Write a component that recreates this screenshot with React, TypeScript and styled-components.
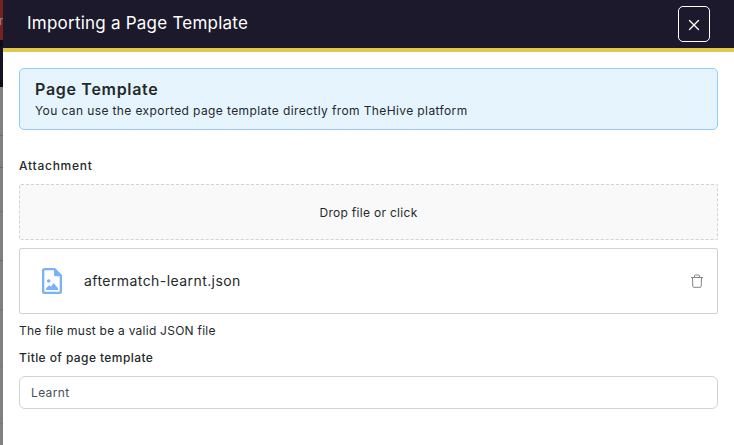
import React from 'react';
import styled, { createGlobalStyle } from 'styled-components';

const GlobalStyle = createGlobalStyle`
  * { box-sizing: border-box; }
  body { margin: 0; background: #fff; font-family: Inter, sans-serif; color: #24292b; overflow: hidden; }
`;

const Screen = styled.div`
  display: flex;
  width: 734px;
  height: 445px;
  overflow: hidden;
`;

const Backdrop = styled.div`
  width: 3px;
  flex: none;
  display: flex;
  flex-direction: column;
  background: #808080;
`;

const Strip = styled.div<{ $h: number; $bg: string; $line?: string }>`
  height: ${p => p.$h}px;
  flex: none;
  background: ${p => p.$bg};
  border-bottom: ${p => (p.$line ? `1px solid ${p.$line}` : '0')};
  overflow: hidden;
  color: #8f8888;
  font-size: 12px;
  line-height: 42px;
  text-indent: -1px;
`;

const Drawer = styled.div`
  flex: 1;
  min-width: 0;
  background: #fff;
`;

const Header = styled.header`
  height: 52px;
  background: #1b192b;
  border-bottom: 4px solid #e1c84d;
  display: flex;
  align-items: center;
  justify-content: space-between;
  padding: 0 24px;
`;

const Title = styled.h1`
  margin: -2px 0 0;
  font-size: 17px;
  font-weight: 400;
  line-height: 24px;
  letter-spacing: 0.23px;
  color: #fff;
  white-space: nowrap;
`;

const CloseButton = styled.button`
  width: 32px;
  height: 36px;
  padding: 0;
  border: 1px solid #fff;
  border-radius: 5px;
  background: transparent;
  display: flex;
  align-items: center;
  justify-content: center;
  svg { margin-top: 2px; }
`;

const Body = styled.main`
  padding: 16px 16px 0;
`;

const Notice = styled.section`
  height: 62px;
  border: 1px solid #94cbf7;
  border-radius: 5px;
  background: #e6f4fe;
  padding: 9px 15px;
`;

const NoticeTitle = styled.h2`
  margin: 0;
  font-size: 16px;
  line-height: 22px;
  font-weight: 600;
  letter-spacing: 0.7px;
`;

const NoticeText = styled.p`
  margin: 1px 0 0;
  font-size: 12px;
  line-height: 20px;
  letter-spacing: 0.39px;
  white-space: nowrap;
`;

const Label = styled.div<{ $top: number; $spacing: number; $weight?: number }>`
  margin-top: ${p => p.$top}px;
  font-size: 12px;
  line-height: 18px;
  font-weight: ${p => p.$weight ?? 500};
  letter-spacing: ${p => p.$spacing}px;
`;

const DropZone = styled.div`
  margin-top: 9px;
  height: 56px;
  border: 1px dashed #d2d2d2;
  border-radius: 2px;
  background: #f9f9f9;
  display: flex;
  align-items: center;
  justify-content: center;
  font-size: 12px;
  letter-spacing: 0.3px;
`;

const FileRow = styled.div`
  margin-top: 8px;
  height: 66px;
  border: 1px solid #d2d2d2;
  border-radius: 2px;
  display: flex;
  align-items: center;
  padding: 0 14px 0 22px;
`;

const FileName = styled.span`
  flex: 1;
  margin: -2px 0 0 22px;
  font-size: 14px;
  letter-spacing: 0.43px;
`;

const Field = styled.input`
  display: block;
  width: 100%;
  height: 33px;
  margin-top: 9px;
  padding: 0 11px;
  border: 1px solid #d2d2d2;
  border-radius: 6px;
  background: #fff;
  font: 400 12px Inter, sans-serif;
  letter-spacing: 0.35px;
  color: #495057;
  outline: none;
`;

const strips = [
  { h: 40, bg: '#79211f', text: 'r' },
  { h: 7, bg: '#0d0c16' },
  { h: 33, bg: '#161329' },
  { h: 7, bg: '#0d0c16' },
  { h: 49, bg: '#808080', line: '#6c6c6c' },
  { h: 32, bg: '#808080', line: '#686868' },
  { h: 44, bg: '#808080', line: '#747474' },
  { h: 49, bg: '#808080', line: '#696969' },
  { h: 49, bg: '#808080', line: '#747474' },
  { h: 57, bg: '#808080', line: '#787878' },
  { h: 57, bg: '#808080', line: '#787878' },
];

const CloseIcon = () => (
  <svg width="12" height="12" viewBox="0 0 12 12" fill="none" stroke="#fff" strokeWidth="1.4" strokeLinecap="round">
    <path d="M1.500 1.500l9 9M10.500 1.500l-9 9" />
  </svg>
);

const ImageFileIcon = () => (
  <svg width="20" height="26" viewBox="0 0 20 26" fill="#7ab2fa">
    <path fillRule="evenodd" d="M2.500 0H13l7 7v16.500a2.500 2.500 0 0 1-2.500 2.500h-15A2.500 2.500 0 0 1 0 23.500v-21A2.500 2.500 0 0 1 2.500 0zM3 2.200a.7.7 0 0 0-.7.7v20.200a.7.7 0 0 0 .7.7h14a.7.7 0 0 0 .7-.7V8.300h-4.200a1.500 1.500 0 0 1-1.500-1.500V2.200z" />
    <circle cx="6.700" cy="13" r="1.800" />
    <path d="M4.200 22v-2l3-2.700 1.700 1.500 2.700-3.800 4.400 5.200V22z" />
  </svg>
);

const TrashIcon = () => (
  <svg width="12" height="14" viewBox="0 0 12 14" fill="none" stroke="#858585" strokeWidth="1">
    <path d="M0 3.500h12M3.500 3V1.800Q3.500 1 4.300 1h3.400q.8 0 .8.800V3M1.500 3.500l.3 9q0 .8.800.8h6.800q.8 0 .8-.8l.3-9" />
  </svg>
);

export default function App() {
  return (
    <Screen>
      <GlobalStyle />
      <Backdrop>
        {strips.map((s, i) => (
          <Strip key={i} $h={s.h} $bg={s.bg} $line={s.line}>{s.text}</Strip>
        ))}
      </Backdrop>
      <Drawer>
        <Header>
          <Title>Importing a Page Template</Title>
          <CloseButton aria-label="Close"><CloseIcon /></CloseButton>
        </Header>
        <Body>
          <Notice>
            <NoticeTitle>Page Template</NoticeTitle>
            <NoticeText>You can use the exported page template directly from TheHive platform</NoticeText>
          </Notice>
          <Label $top={27} $spacing={0.75}>Attachment</Label>
          <DropZone>Drop file or click</DropZone>
          <FileRow>
            <ImageFileIcon />
            <FileName>aftermatch-learnt.json</FileName>
            <TrashIcon />
          </FileRow>
          <Label $top={8} $spacing={0.25} $weight={400}>The file must be a valid JSON file</Label>
          <Label $top={9} $spacing={0.41}>Title of page template</Label>
          <Field defaultValue="Learnt" aria-label="Title of page template" />
        </Body>
      </Drawer>
    </Screen>
  );
}
